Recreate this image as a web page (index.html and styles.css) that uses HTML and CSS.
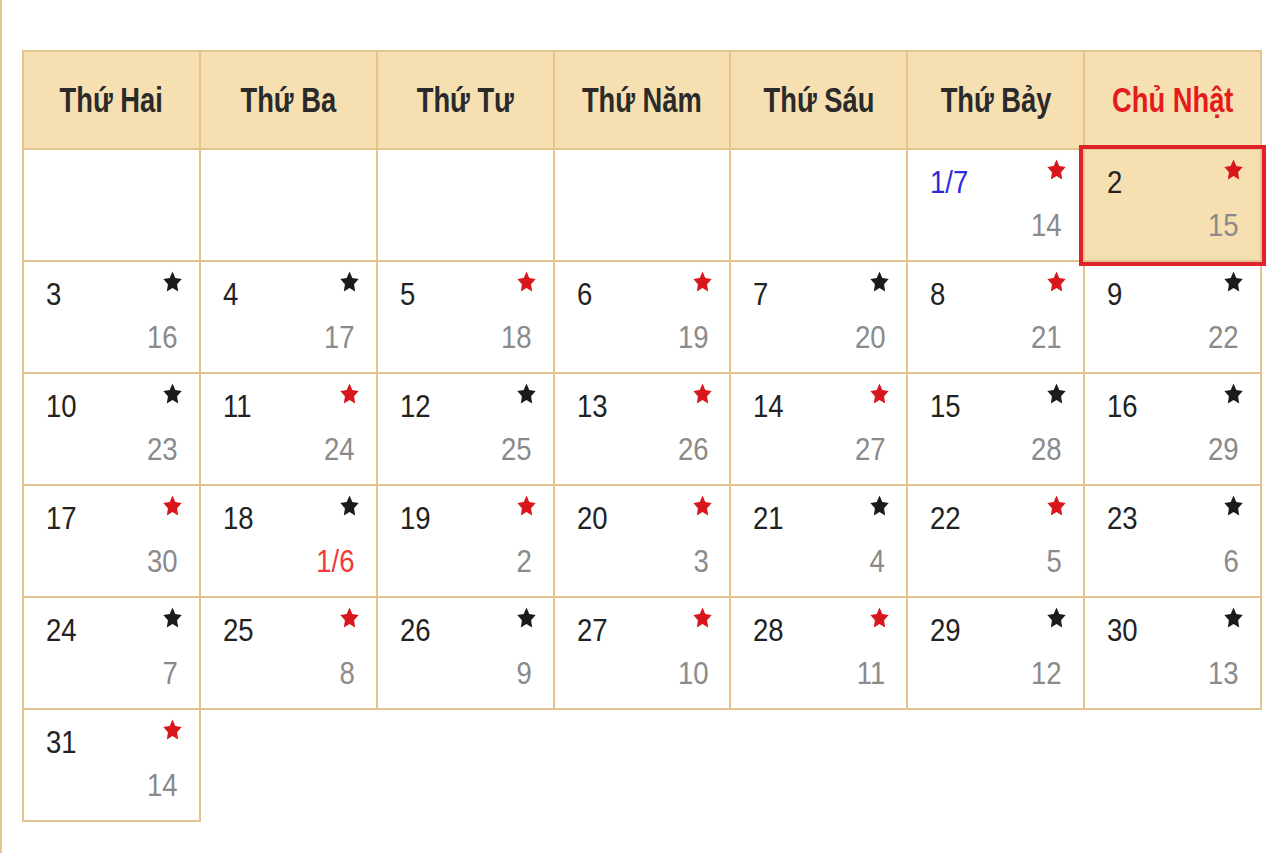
FILE: index.html
```html
<!DOCTYPE html>
<html lang="vi">
<head>
<meta charset="utf-8">
<title>Lịch tháng</title>
<link rel="stylesheet" href="styles.css">
</head>
<body>
<div class="page">
<table class="cal">
<thead>
<tr>
<th><span class="hd">Thứ Hai</span></th>
<th><span class="hd">Thứ Ba</span></th>
<th><span class="hd">Thứ Tư</span></th>
<th><span class="hd">Thứ Năm</span></th>
<th><span class="hd">Thứ Sáu</span></th>
<th><span class="hd">Thứ Bảy</span></th>
<th class="sun"><span class="hd">Chủ Nhật</span></th>
</tr>
</thead>
<tbody>
<tr>
<td></td><td></td><td></td><td></td><td></td>
<td><div class="cell"><div class="top"><span class="d first">1/7</span><svg class="star red" viewBox="0 0 24 24" preserveAspectRatio="none"><path d="M12 1.5l3.2 6.6 7.3 1-5.3 5.1 1.3 7.2L12 18l-6.5 3.4 1.3-7.2L1.5 9.1l7.3-1z"/></svg></div><div class="bot"><span class="l">14</span></div></div></td>
<td class="today"><div class="cell"><div class="top"><span class="d">2</span><svg class="star red" viewBox="0 0 24 24" preserveAspectRatio="none"><path d="M12 1.5l3.2 6.6 7.3 1-5.3 5.1 1.3 7.2L12 18l-6.5 3.4 1.3-7.2L1.5 9.1l7.3-1z"/></svg></div><div class="bot"><span class="l">15</span></div></div></td>
</tr>
<tr>
<td><div class="cell"><div class="top"><span class="d">3</span><svg class="star" viewBox="0 0 24 24" preserveAspectRatio="none"><path d="M12 1.5l3.2 6.6 7.3 1-5.3 5.1 1.3 7.2L12 18l-6.5 3.4 1.3-7.2L1.5 9.1l7.3-1z"/></svg></div><div class="bot"><span class="l">16</span></div></div></td>
<td><div class="cell"><div class="top"><span class="d">4</span><svg class="star" viewBox="0 0 24 24" preserveAspectRatio="none"><path d="M12 1.5l3.2 6.6 7.3 1-5.3 5.1 1.3 7.2L12 18l-6.5 3.4 1.3-7.2L1.5 9.1l7.3-1z"/></svg></div><div class="bot"><span class="l">17</span></div></div></td>
<td><div class="cell"><div class="top"><span class="d">5</span><svg class="star red" viewBox="0 0 24 24" preserveAspectRatio="none"><path d="M12 1.5l3.2 6.6 7.3 1-5.3 5.1 1.3 7.2L12 18l-6.5 3.4 1.3-7.2L1.5 9.1l7.3-1z"/></svg></div><div class="bot"><span class="l">18</span></div></div></td>
<td><div class="cell"><div class="top"><span class="d">6</span><svg class="star red" viewBox="0 0 24 24" preserveAspectRatio="none"><path d="M12 1.5l3.2 6.6 7.3 1-5.3 5.1 1.3 7.2L12 18l-6.5 3.4 1.3-7.2L1.5 9.1l7.3-1z"/></svg></div><div class="bot"><span class="l">19</span></div></div></td>
<td><div class="cell"><div class="top"><span class="d">7</span><svg class="star" viewBox="0 0 24 24" preserveAspectRatio="none"><path d="M12 1.5l3.2 6.6 7.3 1-5.3 5.1 1.3 7.2L12 18l-6.5 3.4 1.3-7.2L1.5 9.1l7.3-1z"/></svg></div><div class="bot"><span class="l">20</span></div></div></td>
<td><div class="cell"><div class="top"><span class="d">8</span><svg class="star red" viewBox="0 0 24 24" preserveAspectRatio="none"><path d="M12 1.5l3.2 6.6 7.3 1-5.3 5.1 1.3 7.2L12 18l-6.5 3.4 1.3-7.2L1.5 9.1l7.3-1z"/></svg></div><div class="bot"><span class="l">21</span></div></div></td>
<td><div class="cell"><div class="top"><span class="d">9</span><svg class="star" viewBox="0 0 24 24" preserveAspectRatio="none"><path d="M12 1.5l3.2 6.6 7.3 1-5.3 5.1 1.3 7.2L12 18l-6.5 3.4 1.3-7.2L1.5 9.1l7.3-1z"/></svg></div><div class="bot"><span class="l">22</span></div></div></td>
</tr>
<tr>
<td><div class="cell"><div class="top"><span class="d">10</span><svg class="star" viewBox="0 0 24 24" preserveAspectRatio="none"><path d="M12 1.5l3.2 6.6 7.3 1-5.3 5.1 1.3 7.2L12 18l-6.5 3.4 1.3-7.2L1.5 9.1l7.3-1z"/></svg></div><div class="bot"><span class="l">23</span></div></div></td>
<td><div class="cell"><div class="top"><span class="d">11</span><svg class="star red" viewBox="0 0 24 24" preserveAspectRatio="none"><path d="M12 1.5l3.2 6.6 7.3 1-5.3 5.1 1.3 7.2L12 18l-6.5 3.4 1.3-7.2L1.5 9.1l7.3-1z"/></svg></div><div class="bot"><span class="l">24</span></div></div></td>
<td><div class="cell"><div class="top"><span class="d">12</span><svg class="star" viewBox="0 0 24 24" preserveAspectRatio="none"><path d="M12 1.5l3.2 6.6 7.3 1-5.3 5.1 1.3 7.2L12 18l-6.5 3.4 1.3-7.2L1.5 9.1l7.3-1z"/></svg></div><div class="bot"><span class="l">25</span></div></div></td>
<td><div class="cell"><div class="top"><span class="d">13</span><svg class="star red" viewBox="0 0 24 24" preserveAspectRatio="none"><path d="M12 1.5l3.2 6.6 7.3 1-5.3 5.1 1.3 7.2L12 18l-6.5 3.4 1.3-7.2L1.5 9.1l7.3-1z"/></svg></div><div class="bot"><span class="l">26</span></div></div></td>
<td><div class="cell"><div class="top"><span class="d">14</span><svg class="star red" viewBox="0 0 24 24" preserveAspectRatio="none"><path d="M12 1.5l3.2 6.6 7.3 1-5.3 5.1 1.3 7.2L12 18l-6.5 3.4 1.3-7.2L1.5 9.1l7.3-1z"/></svg></div><div class="bot"><span class="l">27</span></div></div></td>
<td><div class="cell"><div class="top"><span class="d">15</span><svg class="star" viewBox="0 0 24 24" preserveAspectRatio="none"><path d="M12 1.5l3.2 6.6 7.3 1-5.3 5.1 1.3 7.2L12 18l-6.5 3.4 1.3-7.2L1.5 9.1l7.3-1z"/></svg></div><div class="bot"><span class="l">28</span></div></div></td>
<td><div class="cell"><div class="top"><span class="d">16</span><svg class="star" viewBox="0 0 24 24" preserveAspectRatio="none"><path d="M12 1.5l3.2 6.6 7.3 1-5.3 5.1 1.3 7.2L12 18l-6.5 3.4 1.3-7.2L1.5 9.1l7.3-1z"/></svg></div><div class="bot"><span class="l">29</span></div></div></td>
</tr>
<tr>
<td><div class="cell"><div class="top"><span class="d">17</span><svg class="star red" viewBox="0 0 24 24" preserveAspectRatio="none"><path d="M12 1.5l3.2 6.6 7.3 1-5.3 5.1 1.3 7.2L12 18l-6.5 3.4 1.3-7.2L1.5 9.1l7.3-1z"/></svg></div><div class="bot"><span class="l">30</span></div></div></td>
<td><div class="cell"><div class="top"><span class="d">18</span><svg class="star" viewBox="0 0 24 24" preserveAspectRatio="none"><path d="M12 1.5l3.2 6.6 7.3 1-5.3 5.1 1.3 7.2L12 18l-6.5 3.4 1.3-7.2L1.5 9.1l7.3-1z"/></svg></div><div class="bot"><span class="l newmonth">1/6</span></div></div></td>
<td><div class="cell"><div class="top"><span class="d">19</span><svg class="star red" viewBox="0 0 24 24" preserveAspectRatio="none"><path d="M12 1.5l3.2 6.6 7.3 1-5.3 5.1 1.3 7.2L12 18l-6.5 3.4 1.3-7.2L1.5 9.1l7.3-1z"/></svg></div><div class="bot"><span class="l">2</span></div></div></td>
<td><div class="cell"><div class="top"><span class="d">20</span><svg class="star red" viewBox="0 0 24 24" preserveAspectRatio="none"><path d="M12 1.5l3.2 6.6 7.3 1-5.3 5.1 1.3 7.2L12 18l-6.5 3.4 1.3-7.2L1.5 9.1l7.3-1z"/></svg></div><div class="bot"><span class="l">3</span></div></div></td>
<td><div class="cell"><div class="top"><span class="d">21</span><svg class="star" viewBox="0 0 24 24" preserveAspectRatio="none"><path d="M12 1.5l3.2 6.6 7.3 1-5.3 5.1 1.3 7.2L12 18l-6.5 3.4 1.3-7.2L1.5 9.1l7.3-1z"/></svg></div><div class="bot"><span class="l">4</span></div></div></td>
<td><div class="cell"><div class="top"><span class="d">22</span><svg class="star red" viewBox="0 0 24 24" preserveAspectRatio="none"><path d="M12 1.5l3.2 6.6 7.3 1-5.3 5.1 1.3 7.2L12 18l-6.5 3.4 1.3-7.2L1.5 9.1l7.3-1z"/></svg></div><div class="bot"><span class="l">5</span></div></div></td>
<td><div class="cell"><div class="top"><span class="d">23</span><svg class="star" viewBox="0 0 24 24" preserveAspectRatio="none"><path d="M12 1.5l3.2 6.6 7.3 1-5.3 5.1 1.3 7.2L12 18l-6.5 3.4 1.3-7.2L1.5 9.1l7.3-1z"/></svg></div><div class="bot"><span class="l">6</span></div></div></td>
</tr>
<tr>
<td><div class="cell"><div class="top"><span class="d">24</span><svg class="star" viewBox="0 0 24 24" preserveAspectRatio="none"><path d="M12 1.5l3.2 6.6 7.3 1-5.3 5.1 1.3 7.2L12 18l-6.5 3.4 1.3-7.2L1.5 9.1l7.3-1z"/></svg></div><div class="bot"><span class="l">7</span></div></div></td>
<td><div class="cell"><div class="top"><span class="d">25</span><svg class="star red" viewBox="0 0 24 24" preserveAspectRatio="none"><path d="M12 1.5l3.2 6.6 7.3 1-5.3 5.1 1.3 7.2L12 18l-6.5 3.4 1.3-7.2L1.5 9.1l7.3-1z"/></svg></div><div class="bot"><span class="l">8</span></div></div></td>
<td><div class="cell"><div class="top"><span class="d">26</span><svg class="star" viewBox="0 0 24 24" preserveAspectRatio="none"><path d="M12 1.5l3.2 6.6 7.3 1-5.3 5.1 1.3 7.2L12 18l-6.5 3.4 1.3-7.2L1.5 9.1l7.3-1z"/></svg></div><div class="bot"><span class="l">9</span></div></div></td>
<td><div class="cell"><div class="top"><span class="d">27</span><svg class="star red" viewBox="0 0 24 24" preserveAspectRatio="none"><path d="M12 1.5l3.2 6.6 7.3 1-5.3 5.1 1.3 7.2L12 18l-6.5 3.4 1.3-7.2L1.5 9.1l7.3-1z"/></svg></div><div class="bot"><span class="l">10</span></div></div></td>
<td><div class="cell"><div class="top"><span class="d">28</span><svg class="star red" viewBox="0 0 24 24" preserveAspectRatio="none"><path d="M12 1.5l3.2 6.6 7.3 1-5.3 5.1 1.3 7.2L12 18l-6.5 3.4 1.3-7.2L1.5 9.1l7.3-1z"/></svg></div><div class="bot"><span class="l">11</span></div></div></td>
<td><div class="cell"><div class="top"><span class="d">29</span><svg class="star" viewBox="0 0 24 24" preserveAspectRatio="none"><path d="M12 1.5l3.2 6.6 7.3 1-5.3 5.1 1.3 7.2L12 18l-6.5 3.4 1.3-7.2L1.5 9.1l7.3-1z"/></svg></div><div class="bot"><span class="l">12</span></div></div></td>
<td><div class="cell"><div class="top"><span class="d">30</span><svg class="star" viewBox="0 0 24 24" preserveAspectRatio="none"><path d="M12 1.5l3.2 6.6 7.3 1-5.3 5.1 1.3 7.2L12 18l-6.5 3.4 1.3-7.2L1.5 9.1l7.3-1z"/></svg></div><div class="bot"><span class="l">13</span></div></div></td>
</tr>
<tr class="last">
<td><div class="cell"><div class="top"><span class="d">31</span><svg class="star red" viewBox="0 0 24 24" preserveAspectRatio="none"><path d="M12 1.5l3.2 6.6 7.3 1-5.3 5.1 1.3 7.2L12 18l-6.5 3.4 1.3-7.2L1.5 9.1l7.3-1z"/></svg></div><div class="bot"><span class="l">14</span></div></div></td>
<td class="blank"></td><td class="blank"></td><td class="blank"></td><td class="blank"></td><td class="blank"></td><td class="blank"></td>
</tr>
</tbody>
</table>
</div>
</body>
</html>
```

FILE: styles.css
```css
html, body {
  margin: 0;
  padding: 0;
  background: #ffffff;
}

body {
  font-family: "Liberation Sans", Arial, sans-serif;
}

.page {
  min-height: 853px;
  box-sizing: border-box;
  border-left: 2px solid #e6c58e;
  padding: 50px 0 0 20px;
}

.cal {
  border-collapse: collapse;
  table-layout: fixed;
  width: 1240px;
}

.cal th,
.cal td {
  border: 2px solid #e3c48f;
  padding: 0;
  vertical-align: top;
}

.cal th {
  background: #f6e0b2;
  height: 96px;
  vertical-align: middle;
  text-align: center;
  font-weight: bold;
  font-size: 35px;
  color: #2a2a2a;
}

.cal th.sun {
  color: #e41b1b;
}

.hd {
  display: inline-block;
  transform: scaleX(0.78);
  transform-origin: center;
  white-space: nowrap;
}

.cal td {
  height: 110px;
}

.cal tr.last td.blank {
  border: none;
}

.cell {
  position: relative;
  height: 110px;
  box-sizing: border-box;
  padding: 16px 21px 0 22px;
  display: flex;
  flex-direction: column;
}

.today {
  background: #f6e0b2;
}

.today .cell::after {
  content: "";
  position: absolute;
  left: -6px;
  right: -6px;
  top: -5px;
  bottom: -6px;
  border: 4px solid #e0232b;
}

.top {
  display: flex;
  justify-content: space-between;
  align-items: flex-start;
  height: 32px;
}

.d {
  display: inline-block;
  font-size: 32px;
  line-height: 32px;
  color: #222222;
  transform: scaleX(0.86);
  transform-origin: left center;
}

.d.first {
  color: #2b2bdc;
}

.star {
  flex: none;
  width: 21px;
  height: 24px;
  margin-top: -8px;
  margin-right: -5px;
  fill: #1b1b1b;
}

.star.red {
  fill: #d8171d;
}

.bot {
  margin-top: 11px;
  text-align: right;
}

.l {
  display: inline-block;
  font-size: 32px;
  line-height: 32px;
  color: #8a8a8a;
  transform: scaleX(0.86);
  transform-origin: right center;
}

.l.newmonth {
  color: #f03a3a;
}
```
